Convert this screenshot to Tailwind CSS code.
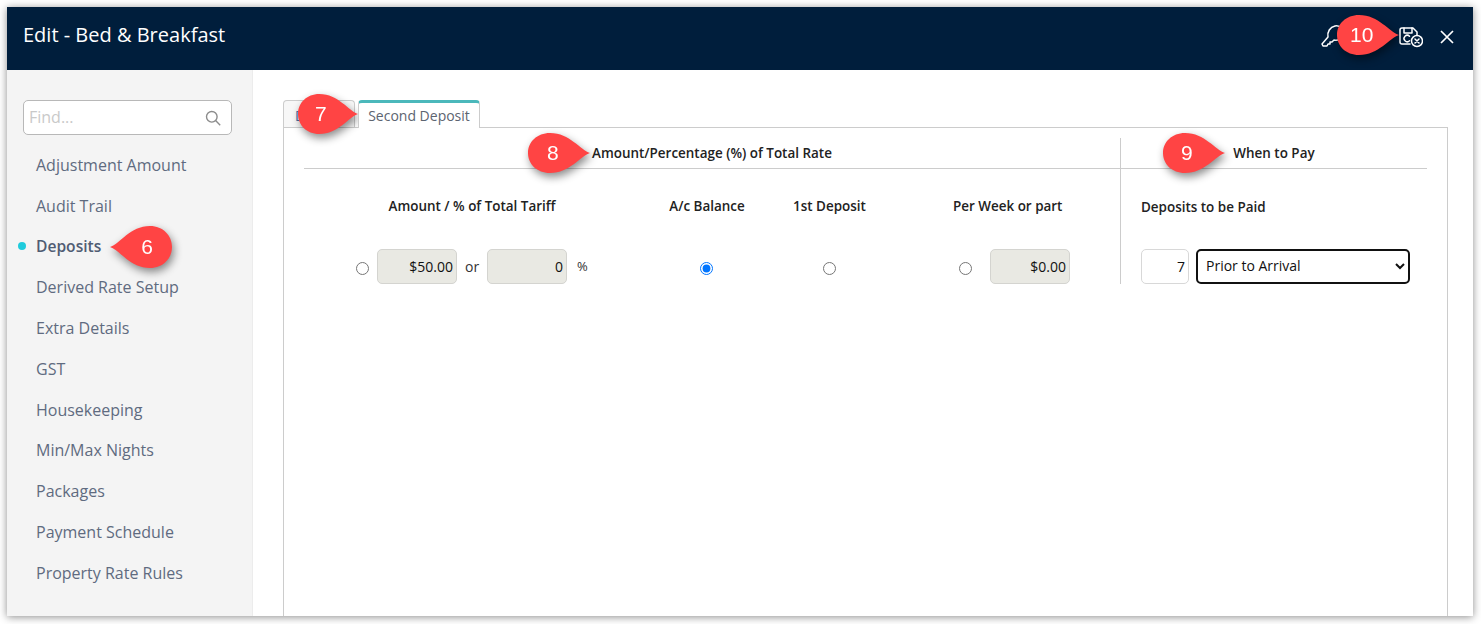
<!DOCTYPE html>
<html lang="en">
<head>
  <meta charset="UTF-8">
  <title>Edit - Bed &amp; Breakfast</title>
  <script src="https://cdn.jsdelivr.net/npm/@tailwindcss/browser@4"></script>
</head>
<body class="relative h-screen overflow-hidden bg-white font-['Open_Sans',sans-serif]">

  <!-- window -->
  <div class="ml-[7px] mt-[7px] flex h-[609px] w-[1466px] flex-col bg-white shadow-[0_1px_8px_rgba(0,0,0,0.45)]">

    <header class="flex h-[63px] items-center justify-between bg-[#001e3c] pb-[3px] pl-[16px] pr-[19px] text-white">
      <h1 class="mb-[4px] text-[20px] font-normal">Edit - Bed &amp; Breakfast</h1>
      <div class="flex items-center">
        <svg class="mb-[2px] mr-[56px] h-[24px] w-[22px] overflow-visible" viewBox="0 0 22 24" fill="none" stroke="white" stroke-width="1.5" stroke-linejoin="round">
          <path d="M1 20L7 13C6 8 9 3 14 2 20 1 23 6 22 11 21 15 17 17 13 16L11 18H9V20H7L6 22H2Z"/>
        </svg>
        <svg class="mr-[17px] h-[22px] w-[24px]" viewBox="0 0 24 22" fill="none" stroke="white" stroke-width="1.5" stroke-linejoin="round" stroke-linecap="round">
          <path d="M11 18H3a2 2 0 0 1-2-2V4a2 2 0 0 1 2-2h11l4 4v3"/>
          <path d="M5 2v5h8V2"/>
          <path d="M10.5 10.2a3.2 3.2 0 1 0 0 4.6"/>
          <circle cx="18" cy="15" r="5.5"/>
          <path d="M16 13l4 4M20 13l-4 4"/>
        </svg>
        <svg class="h-[14px] w-[14px]" viewBox="0 0 14 14" fill="none" stroke="white" stroke-width="1.7">
          <path d="M1 1l12 12M13 1L1 13"/>
        </svg>
      </div>
    </header>

    <div class="flex min-h-0 flex-1">

      <!-- sidebar -->
      <aside class="w-[246px] border-r border-[#ececec] bg-[#f4f4f4] pl-[16px] pt-[30px] text-[16px] text-[#5f6b80]">
        <div class="flex h-[35px] w-[209px] items-center justify-between rounded-[5px] border border-[#b8b8b8] bg-white pl-[5px] pr-[10px]">
          <span class="mb-[2px] text-[#c9c9c9]">Find...</span>
          <svg class="h-[16px] w-[16px]" viewBox="0 0 16 16" fill="none" stroke="#8c8c8c" stroke-width="1.4">
            <circle cx="6.8" cy="6.8" r="5.3"/>
            <path d="M10.6 10.6l4.6 4.6"/>
          </svg>
        </div>
        <ul class="mt-[9.5px] pl-[13px]">
          <li class="flex h-[40.8px] items-center">Adjustment Amount</li>
          <li class="flex h-[40.8px] items-center">Audit Trail</li>
          <li class="relative flex h-[40.8px] items-center text-[15.6px] font-semibold text-[#505c73]">
            <span class="absolute left-[-18px] h-[8px] w-[8px] rounded-full bg-[#1fcbdc]"></span>Deposits
          </li>
          <li class="flex h-[40.8px] items-center">Derived Rate Setup</li>
          <li class="flex h-[40.8px] items-center">Extra Details</li>
          <li class="flex h-[40.8px] items-center">GST</li>
          <li class="flex h-[40.8px] items-center">Housekeeping</li>
          <li class="flex h-[40.8px] items-center">Min/Max Nights</li>
          <li class="flex h-[40.8px] items-center">Packages</li>
          <li class="flex h-[40.8px] items-center">Payment Schedule</li>
          <li class="flex h-[40.8px] items-center">Property Rate Rules</li>
        </ul>
      </aside>

      <!-- content -->
      <main class="flex flex-1 flex-col pl-[30px] pt-[30px]">
        <div class="flex h-[28px] gap-[3px] text-[14px] text-[#5c6470]">
          <div class="h-[28px] w-[72px] rounded-t-[4px] border border-b-0 border-[#cccccc] bg-[#f7f7f7] pl-[11px] pt-[4px] text-[#4a6fa5]">Deposit</div>
          <div class="relative z-10 h-[28px] w-[122px] rounded-t-[4px] border border-b-0 border-[#cccccc] border-t-[3px] border-t-[#4bb8bb] bg-white text-center leading-[25px]">Second Deposit</div>
        </div>

        <div class="-mt-px flex w-[1165px] flex-1 border-x border-t border-[#cccccc] pl-[20px] pt-[10px] text-[#222222]">
          <!-- amount section -->
          <section class="w-[816px]">
            <h2 class="h-[31px] border-b border-[#cccccc] text-center text-[13.45px] font-semibold leading-[30px]">Amount/Percentage (%) of Total Rate</h2>
            <div class="grid grid-cols-[336px_134px_111px_235px] text-[13.45px] font-semibold">
              <div class="h-[80px] pt-[27px] text-center leading-[20px]">Amount / % of Total Tariff</div>
              <div class="pt-[27px] text-center leading-[20px]">A/c Balance</div>
              <div class="pt-[27px] text-center leading-[20px]">1st Deposit</div>
              <div class="pt-[27px] pl-[68px] leading-[20px]">Per Week or part</div>
            </div>
            <div class="grid h-[35px] grid-cols-[336px_134px_111px_235px] items-center text-[14px] text-[#333333]">
              <div class="flex items-center pl-[52px]">
                <input type="radio" name="depositType" class="m-0 mt-[4px]">
                <input type="text" value="$50.00" disabled class="ml-[8px] h-[35px] w-[80px] rounded-[5px] border border-[#d4d4d0] bg-[#e9e9e3] pr-[3px] text-right text-[#111111]">
                <span class="ml-[8px] w-[22px]">or</span>
                <input type="text" value="0" disabled class="h-[35px] w-[80px] rounded-[5px] border border-[#d4d4d0] bg-[#e9e9e3] pr-[3px] text-right text-[#111111]">
                <span class="ml-[10px] text-[13px]">%</span>
              </div>
              <div class="flex justify-center pr-[2px]"><input type="radio" name="depositType" checked class="m-0 mt-[4px]"></div>
              <div class="flex justify-center"><input type="radio" name="depositType" class="m-0 mt-[4px]"></div>
              <div class="flex items-center pl-[74px]">
                <input type="radio" name="depositType" class="m-0 mt-[4px]">
                <input type="text" value="$0.00" disabled class="ml-[18px] h-[35px] w-[80px] rounded-[5px] border border-[#d4d4d0] bg-[#e9e9e3] pr-[3px] text-right text-[#111111]">
              </div>
            </div>
          </section>

          <!-- when to pay section -->
          <section class="h-[146px] w-[307px] border-l border-[#cccccc]">
            <h2 class="h-[31px] border-b border-[#cccccc] text-center text-[13.45px] font-semibold leading-[30px]">When to Pay</h2>
            <div class="h-[80px] pl-[20px] pt-[28px] text-[13.45px] font-semibold leading-[20px]">Deposits to be Paid</div>
            <div class="flex h-[35px] gap-[7px] pl-[20px] text-[14px] text-[#111111]">
              <input type="text" value="7" class="h-[35px] w-[48px] rounded-[5px] border border-[#d8d8d8] bg-white pr-[3px] text-right">
              <select class="h-[35px] w-[214px] rounded-[5px] border-2 border-[#111111] bg-white pb-[3px] pl-[4px]">
                <option>Prior to Arrival</option>
              </select>
            </div>
          </section>
        </div>
      </main>
    </div>
  </div>

  <!-- numbered callouts -->
  <div class="absolute left-[110px] top-[226px] h-[42px] w-[62px] drop-shadow-[2px_4px_4px_rgba(0,0,0,0.45)]">
    <svg class="h-full w-full -scale-x-100" viewBox="0 0 62 40" preserveAspectRatio="none"><path fill="#ff4444" d="M62 20C52 23 42 40 22 40 9 40 0 31 0 20S9 0 22 0C42 0 52 17 62 20Z"/></svg>
    <span class="absolute inset-y-0 right-[19px] flex items-center font-['Liberation_Sans',sans-serif] text-[21px] text-white">6</span>
  </div>
  <div class="absolute left-[298px] top-[94px] h-[40px] w-[60px] drop-shadow-[2px_4px_4px_rgba(0,0,0,0.45)]">
    <svg class="h-full w-full" viewBox="0 0 62 40" preserveAspectRatio="none"><path fill="#ff4444" d="M62 20C52 23 42 40 22 40 9 40 0 31 0 20S9 0 22 0C42 0 52 17 62 20Z"/></svg>
    <span class="absolute inset-y-0 left-[17px] flex items-center font-['Liberation_Sans',sans-serif] text-[21px] text-white">7</span>
  </div>
  <div class="absolute left-[528px] top-[133px] h-[40px] w-[62px] drop-shadow-[2px_4px_4px_rgba(0,0,0,0.45)]">
    <svg class="h-full w-full" viewBox="0 0 62 40"><path fill="#ff4444" d="M62 20C52 23 42 40 22 40 9 40 0 31 0 20S9 0 22 0C42 0 52 17 62 20Z"/></svg>
    <span class="absolute inset-y-0 left-[19px] flex items-center font-['Liberation_Sans',sans-serif] text-[21px] text-white">8</span>
  </div>
  <div class="absolute left-[1163px] top-[133px] h-[40px] w-[62px] drop-shadow-[2px_4px_4px_rgba(0,0,0,0.45)]">
    <svg class="h-full w-full" viewBox="0 0 62 40"><path fill="#ff4444" d="M62 20C52 23 42 40 22 40 9 40 0 31 0 20S9 0 22 0C42 0 52 17 62 20Z"/></svg>
    <span class="absolute inset-y-0 left-[18px] flex items-center font-['Liberation_Sans',sans-serif] text-[21px] text-white">9</span>
  </div>
  <div class="absolute left-[1337px] top-[15px] h-[40px] w-[62px] drop-shadow-[2px_4px_4px_rgba(0,0,0,0.45)]">
    <svg class="h-full w-full" viewBox="0 0 62 40"><path fill="#ff4444" d="M62 20C52 23 42 40 22 40 9 40 0 31 0 20S9 0 22 0C42 0 52 17 62 20Z"/></svg>
    <span class="absolute inset-y-0 left-[13px] flex items-center font-['Liberation_Sans',sans-serif] text-[21px] text-white">10</span>
  </div>

</body>
</html>
